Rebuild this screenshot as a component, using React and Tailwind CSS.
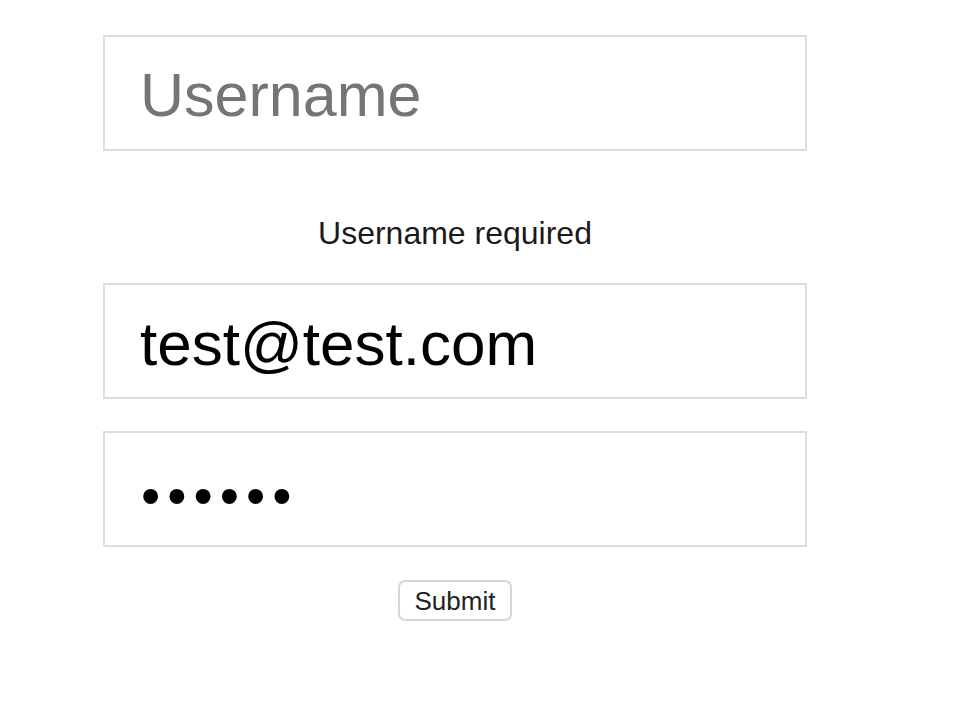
import React from "react";

const inputCls =
  "block w-[704px] h-[116px] border-2 border-[#dcdcdc] bg-white pl-[35px] pr-[35px] pt-[4px] text-black outline-none placeholder:text-[#757575]";

const App = () => {
  return (
    <div
      className="min-h-[706px] w-[972px] bg-white pt-[35px] pl-[103px]"
      style={{ fontFamily: '"Liberation Sans", Arial, sans-serif' }}
    >
      <form className="flex w-[704px] flex-col items-center" onSubmit={(e) => e.preventDefault()}>
        <input className={`${inputCls} text-[61px]`} type="text" placeholder="Username" />
        <p className="mt-[66px] text-[32px] leading-none text-[#1a1a1a]">Username required</p>
        <input
          className={`${inputCls} mt-[34px] text-[62px]`}
          type="email"
          defaultValue="test@test.com"
        />
        <input
          className={`${inputCls} mt-[32px] pt-[14px] pl-[36px] text-[55px] tracking-[7px]`}
          type="password"
          defaultValue="123456"
        />
        <button
          type="submit"
          className="mt-[33px] h-[41px] w-[114px] rounded-[7px] border-2 border-[#d6d6d6] bg-white text-[26px] leading-none text-[#222]"
        >
          Submit
        </button>
      </form>
    </div>
  );
};

export default App;
